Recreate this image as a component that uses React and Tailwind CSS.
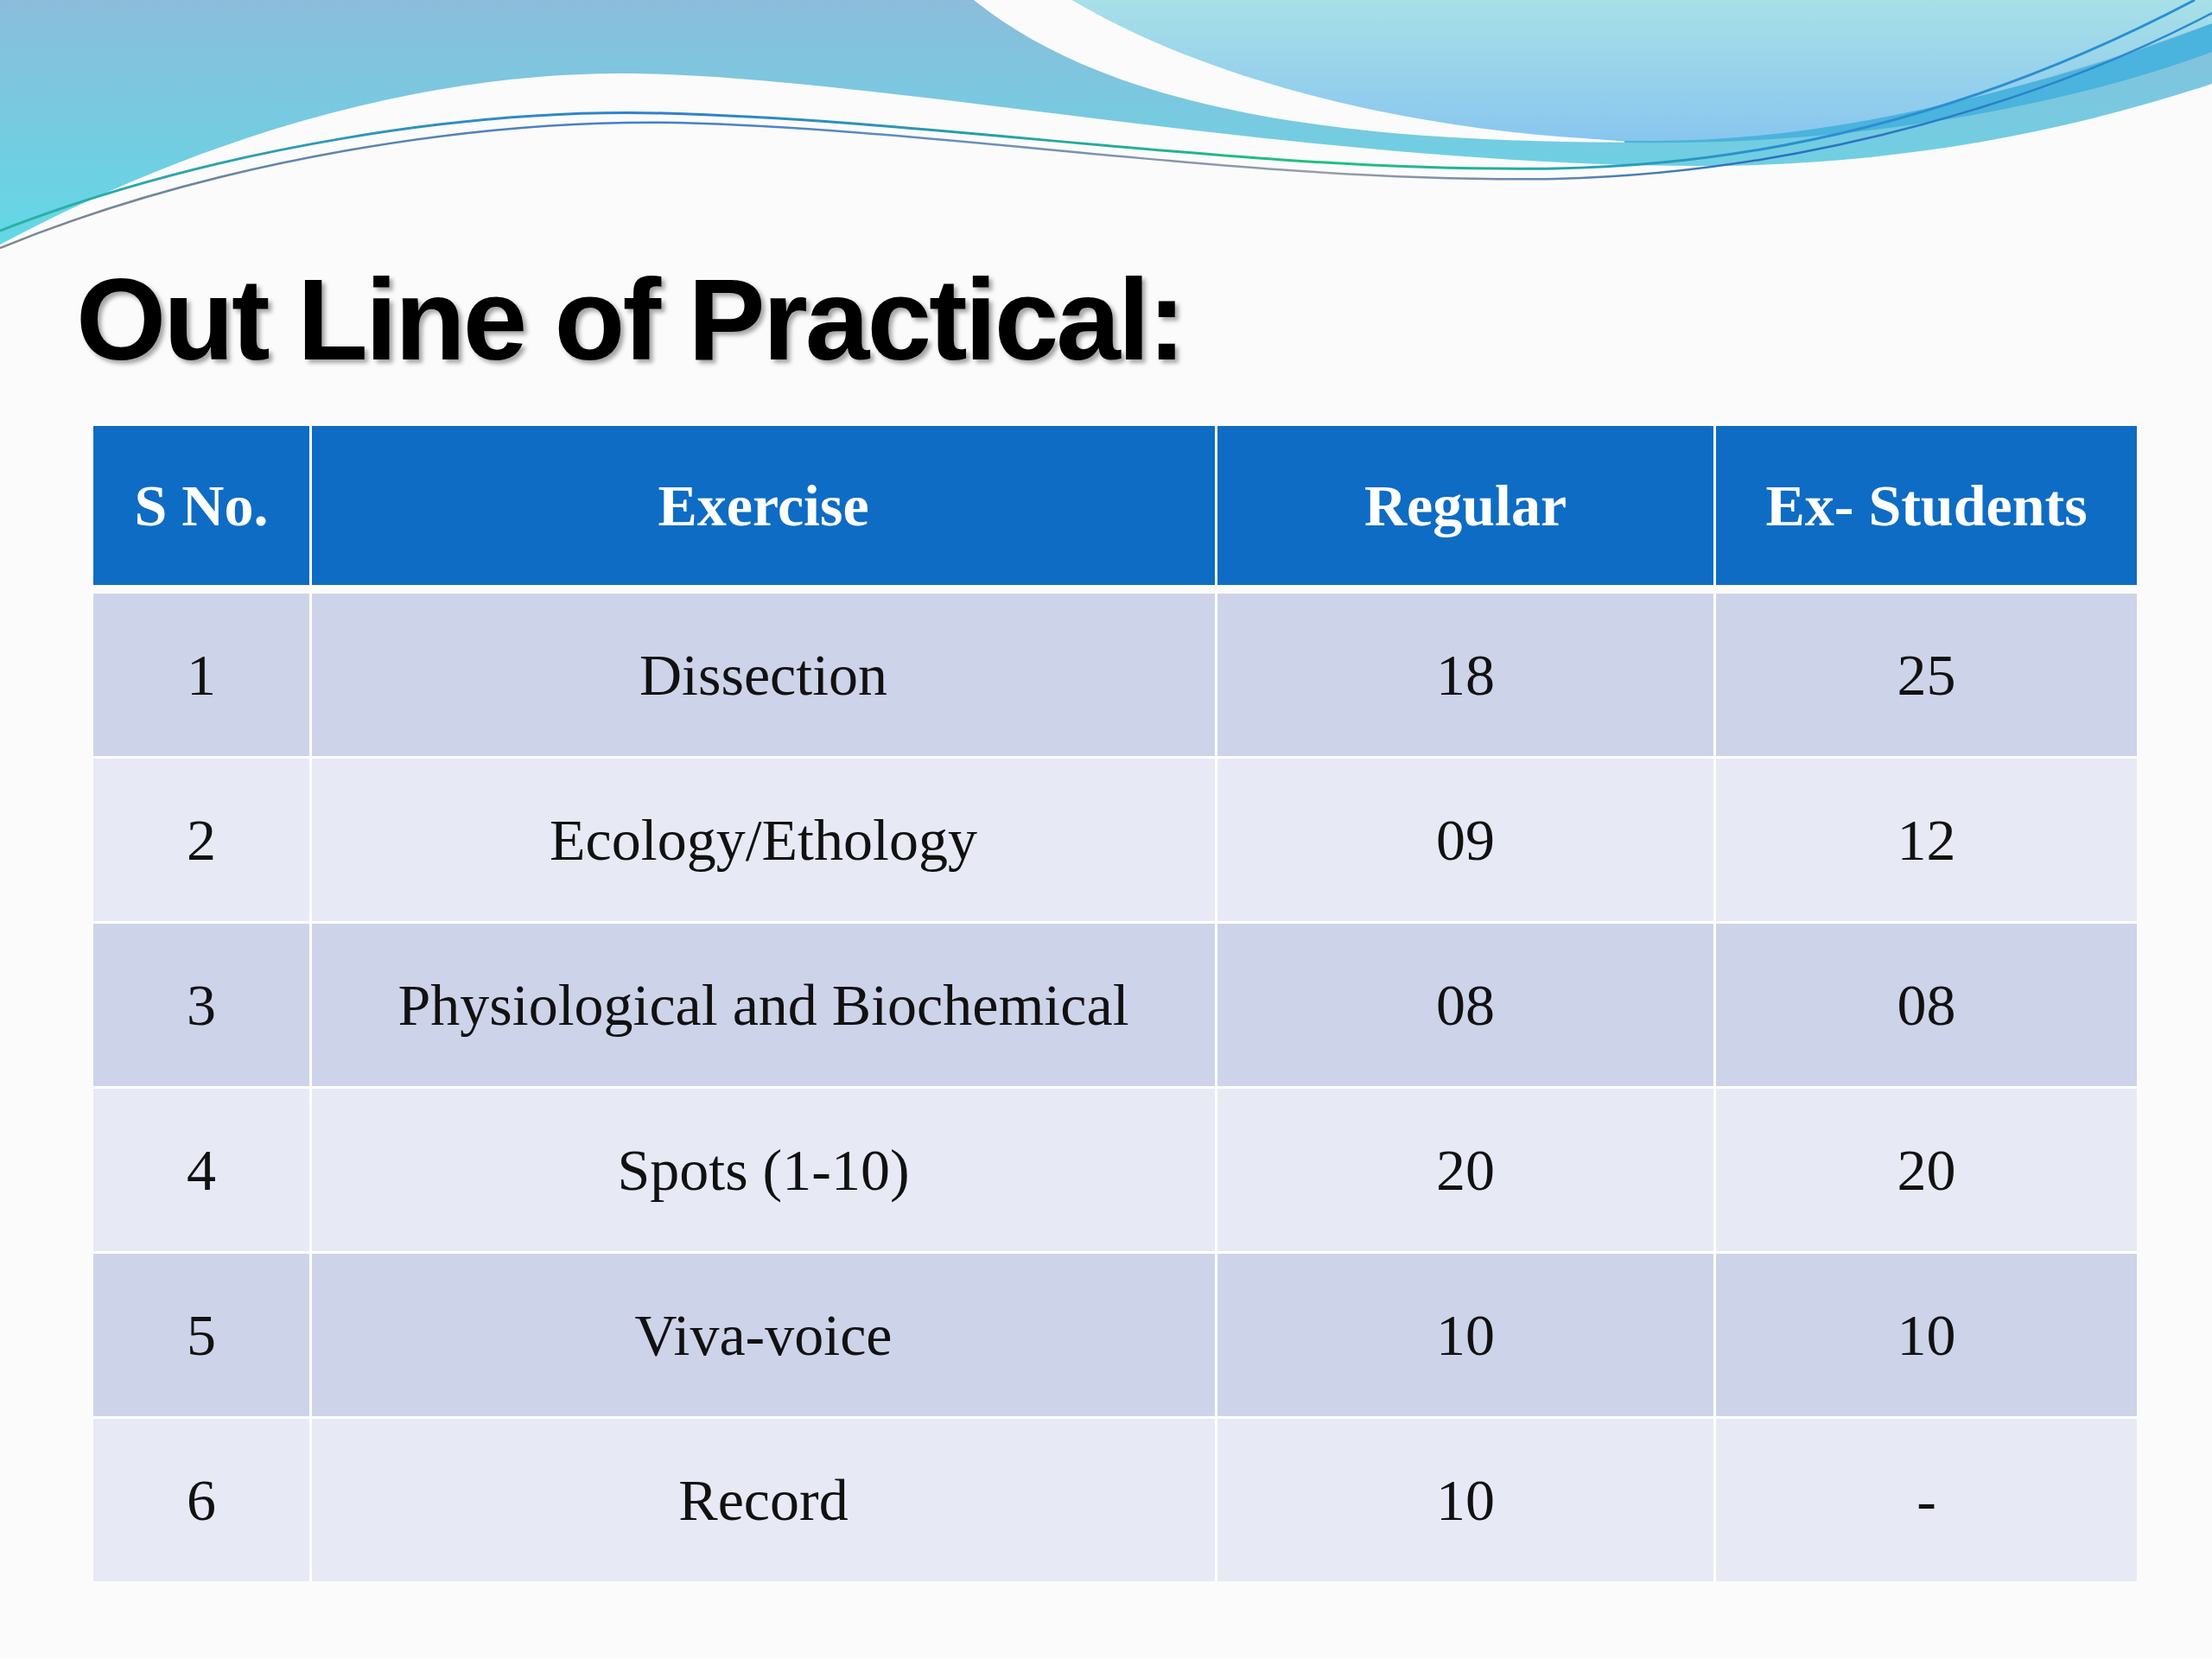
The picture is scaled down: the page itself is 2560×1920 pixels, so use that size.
import React from 'react'

const rows = [
  ['1', 'Dissection', '18', '25'],
  ['2', 'Ecology/Ethology', '09', '12'],
  ['3', 'Physiological and Biochemical', '08', '08'],
  ['4', 'Spots (1-10)', '20', '20'],
  ['5', 'Viva-voice', '10', '10'],
  ['6', 'Record', '10', '-'],
]

function Waves() {
  return (
    <svg width="2560" height="300" viewBox="0 0 2560 300" className="block">
      <defs>
        <linearGradient id="teal" x1="0" y1="0" x2="0" y2="1">
          <stop offset="0" stopColor="#8bbddb" />
          <stop offset="1" stopColor="#62d8e6" />
        </linearGradient>
        <linearGradient id="pale" x1="0" y1="0" x2="0" y2="1">
          <stop offset="0" stopColor="#a8e0e7" />
          <stop offset="1" stopColor="#88c6ef" />
        </linearGradient>
        <linearGradient id="line" x1="0" y1="0" x2="1" y2="0">
          <stop offset="0" stopColor="#2bb3a0" />
          <stop offset="0.3" stopColor="#2f7fd0" />
          <stop offset="0.6" stopColor="#1fc27e" />
          <stop offset="0.8" stopColor="#2a8fd0" />
          <stop offset="1" stopColor="#2a8fd0" />
        </linearGradient>
        <linearGradient id="line2" x1="0" y1="0" x2="1" y2="0">
          <stop offset="0" stopColor="#808890" />
          <stop offset="0.3" stopColor="#3f7fd0" />
          <stop offset="0.6" stopColor="#9a9ea4" />
          <stop offset="0.8" stopColor="#2a6fc0" />
          <stop offset="1" stopColor="#2a8fd0" />
        </linearGradient>
      </defs>
      {/* main teal swoosh */}
      <path
        d="M0,0 H2560 V97 C2400,150 2200,193 1960,192 C1500,190 1000,85 718,85 C500,85 250,150 0,283 Z"
        fill="url(#teal)"
      />
      {/* white gap */}
      <path d="M1127,0 C1300,140 1600,165 1905,165 C1650,150 1400,95 1241,0 Z" fill="#fbfbfb" />
      {/* dark band right */}
      <path d="M1880,163 C2150,160 2400,90 2560,27 V60 C2400,120 2150,170 1880,165 Z" fill="#4ab3de" />
      {/* pale region */}
      <path d="M1241,0 C1400,95 1650,158 1905,163 C2150,165 2400,85 2560,27 V0 Z" fill="url(#pale)" />
      {/* thin lines */}
      <path
        d="M0,267 C250,170 550,125 767,131 C1100,140 1450,200 1800,195 C2100,190 2350,100 2540,0"
        fill="none"
        stroke="url(#line)"
        strokeWidth="3"
      />
      <path
        d="M0,287 C250,185 550,138 784,142 C1100,150 1450,212 1800,207 C2100,200 2380,110 2560,15"
        fill="none"
        stroke="url(#line2)"
        strokeWidth="2.5"
      />
    </svg>
  )
}

function Cell({ children, className = '' }) {
  return (
    <div className={`flex items-center justify-center ${className}`}>
      {children}
    </div>
  )
}

export default function App() {
  const cols = 'grid grid-cols-[250px_1045px_574px_487px] gap-x-[3px]'

  return (
    <div className="w-[2560px] h-[1920px] bg-[#fbfbfb] overflow-hidden">
      <Waves />

      <h1 className="mt-[3px] pl-[88px] font-['Liberation_Sans',Arial,sans-serif] font-bold text-[134px] leading-none tracking-[-3px] text-black [text-shadow:4px_4px_5px_rgba(0,0,0,0.35)]">
        Out Line of Practical:
      </h1>

      <div className="mt-[56px] ml-[108px] w-[2365px] font-['Liberation_Serif','Times_New_Roman',serif] text-[68px] leading-none">
        {/* Header */}
        <div className={`${cols} bg-white`}>
          {['S No.', 'Exercise', 'Regular', 'Ex- Students'].map((h) => (
            <Cell key={h} className="h-[184px] bg-[#0e6cc4] font-bold text-white">
              {h}
            </Cell>
          ))}
        </div>

        {/* Body */}
        <div className="mt-[10px] flex flex-col gap-y-[3px] bg-white">
          {rows.map((r, i) => (
            <div key={r[0]} className={cols}>
              {r.map((v, j) => (
                <Cell
                  key={j}
                  className={`h-[188px] text-[#111] ${i % 2 === 0 ? 'bg-[#cdd4e9]' : 'bg-[#e7eaf5]'}`}
                >
                  {v}
                </Cell>
              ))}
            </div>
          ))}
        </div>
      </div>
    </div>
  )
}
